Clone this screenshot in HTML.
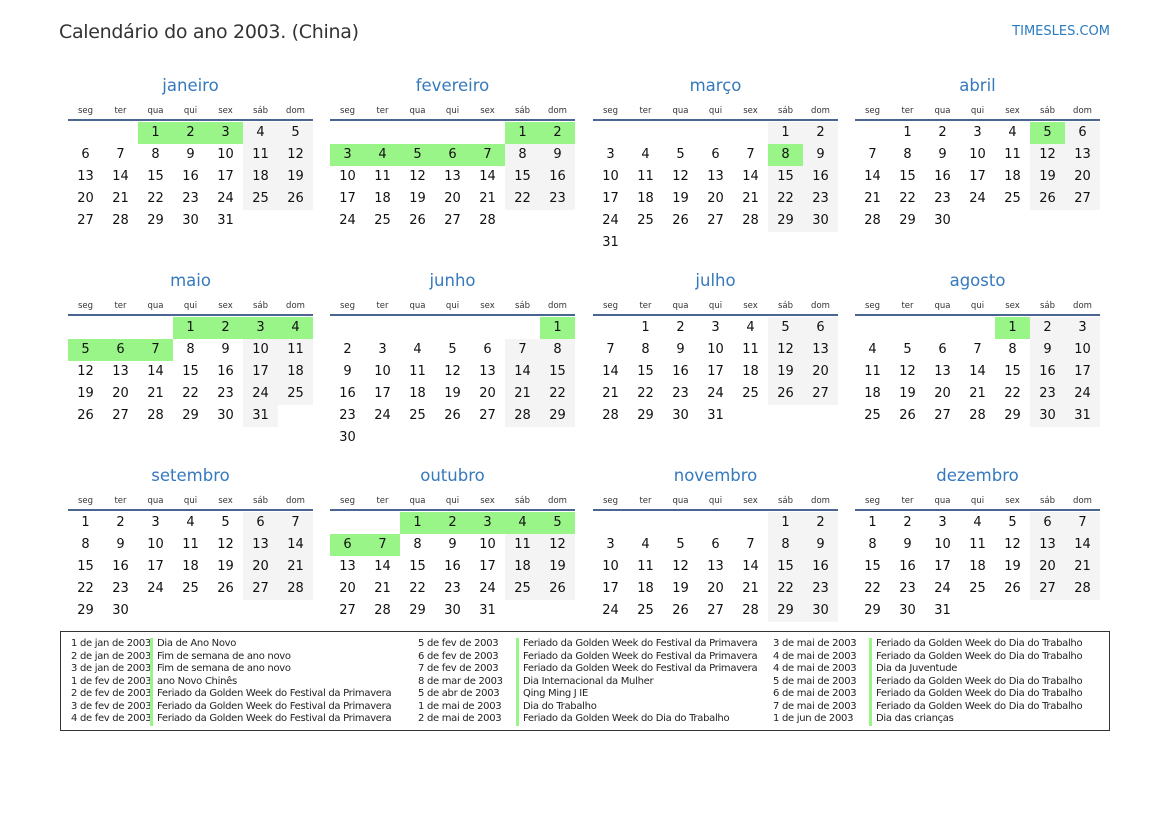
<!DOCTYPE html>
<html><head><meta charset="utf-8"><style>
*{margin:0;padding:0;box-sizing:border-box}
body{width:1169px;height:827px;background:#fff;position:relative;font-family:"DejaVu Sans","Liberation Sans",sans-serif;color:#111;overflow:hidden}
.title{position:absolute;left:59px;top:21px;font-size:19px;color:#333;letter-spacing:-0.3px}
.logo{position:absolute;right:59px;top:24px;font-size:13px;color:#2a7ac0}
.m{position:absolute;width:245px}
.t{height:24px;line-height:24px;text-align:center;font-size:16.5px;color:#3579bd}
.hd{display:grid;grid-template-columns:repeat(7,35px);margin-top:7px;height:12px;line-height:12px;font-size:8.5px;color:#333;text-align:center}
.ln{height:2px;background:#4a6690;margin-top:2px}
.g{display:grid;grid-template-columns:repeat(7,35px);grid-auto-rows:22px;margin-top:1px}
.g>*{text-align:center;line-height:22px;font-size:13px;font-style:normal;font-weight:normal;text-decoration:none}
.g>:nth-child(7n+6):not(u),.g>:nth-child(7n):not(u){background:#f4f4f4}
.g>b{background:#99f588!important}
.lg{position:absolute;left:60px;top:631px;width:1050px;height:100px;border:1.5px solid #333}
.c,.d{position:absolute;top:6px;font-size:10px;line-height:12.5px;color:#222;letter-spacing:-0.3px;white-space:nowrap}
.d{border-left:3px solid #99f588;padding-left:4px}
</style></head><body>
<div class="title">Calendário do ano 2003. (China)</div>
<div class="logo">TIMESLES.COM</div>

<div class="m" style="left:68px;top:74px"><div class="t">janeiro</div><div class="hd"><span>seg</span><span>ter</span><span>qua</span><span>qui</span><span>sex</span><span>sáb</span><span>dom</span></div><div class="ln"></div><div class="g"><u></u><u></u><b>1</b><b>2</b><b>3</b><i>4</i><i>5</i><i>6</i><i>7</i><i>8</i><i>9</i><i>10</i><i>11</i><i>12</i><i>13</i><i>14</i><i>15</i><i>16</i><i>17</i><i>18</i><i>19</i><i>20</i><i>21</i><i>22</i><i>23</i><i>24</i><i>25</i><i>26</i><i>27</i><i>28</i><i>29</i><i>30</i><i>31</i></div></div>

<div class="m" style="left:330px;top:74px"><div class="t">fevereiro</div><div class="hd"><span>seg</span><span>ter</span><span>qua</span><span>qui</span><span>sex</span><span>sáb</span><span>dom</span></div><div class="ln"></div><div class="g"><u></u><u></u><u></u><u></u><u></u><b>1</b><b>2</b><b>3</b><b>4</b><b>5</b><b>6</b><b>7</b><i>8</i><i>9</i><i>10</i><i>11</i><i>12</i><i>13</i><i>14</i><i>15</i><i>16</i><i>17</i><i>18</i><i>19</i><i>20</i><i>21</i><i>22</i><i>23</i><i>24</i><i>25</i><i>26</i><i>27</i><i>28</i></div></div>

<div class="m" style="left:593px;top:74px"><div class="t">março</div><div class="hd"><span>seg</span><span>ter</span><span>qua</span><span>qui</span><span>sex</span><span>sáb</span><span>dom</span></div><div class="ln"></div><div class="g"><u></u><u></u><u></u><u></u><u></u><i>1</i><i>2</i><i>3</i><i>4</i><i>5</i><i>6</i><i>7</i><b>8</b><i>9</i><i>10</i><i>11</i><i>12</i><i>13</i><i>14</i><i>15</i><i>16</i><i>17</i><i>18</i><i>19</i><i>20</i><i>21</i><i>22</i><i>23</i><i>24</i><i>25</i><i>26</i><i>27</i><i>28</i><i>29</i><i>30</i><i>31</i></div></div>

<div class="m" style="left:855px;top:74px"><div class="t">abril</div><div class="hd"><span>seg</span><span>ter</span><span>qua</span><span>qui</span><span>sex</span><span>sáb</span><span>dom</span></div><div class="ln"></div><div class="g"><u></u><i>1</i><i>2</i><i>3</i><i>4</i><b>5</b><i>6</i><i>7</i><i>8</i><i>9</i><i>10</i><i>11</i><i>12</i><i>13</i><i>14</i><i>15</i><i>16</i><i>17</i><i>18</i><i>19</i><i>20</i><i>21</i><i>22</i><i>23</i><i>24</i><i>25</i><i>26</i><i>27</i><i>28</i><i>29</i><i>30</i></div></div>

<div class="m" style="left:68px;top:269px"><div class="t">maio</div><div class="hd"><span>seg</span><span>ter</span><span>qua</span><span>qui</span><span>sex</span><span>sáb</span><span>dom</span></div><div class="ln"></div><div class="g"><u></u><u></u><u></u><b>1</b><b>2</b><b>3</b><b>4</b><b>5</b><b>6</b><b>7</b><i>8</i><i>9</i><i>10</i><i>11</i><i>12</i><i>13</i><i>14</i><i>15</i><i>16</i><i>17</i><i>18</i><i>19</i><i>20</i><i>21</i><i>22</i><i>23</i><i>24</i><i>25</i><i>26</i><i>27</i><i>28</i><i>29</i><i>30</i><i>31</i></div></div>

<div class="m" style="left:330px;top:269px"><div class="t">junho</div><div class="hd"><span>seg</span><span>ter</span><span>qua</span><span>qui</span><span>sex</span><span>sáb</span><span>dom</span></div><div class="ln"></div><div class="g"><u></u><u></u><u></u><u></u><u></u><u></u><b>1</b><i>2</i><i>3</i><i>4</i><i>5</i><i>6</i><i>7</i><i>8</i><i>9</i><i>10</i><i>11</i><i>12</i><i>13</i><i>14</i><i>15</i><i>16</i><i>17</i><i>18</i><i>19</i><i>20</i><i>21</i><i>22</i><i>23</i><i>24</i><i>25</i><i>26</i><i>27</i><i>28</i><i>29</i><i>30</i></div></div>

<div class="m" style="left:593px;top:269px"><div class="t">julho</div><div class="hd"><span>seg</span><span>ter</span><span>qua</span><span>qui</span><span>sex</span><span>sáb</span><span>dom</span></div><div class="ln"></div><div class="g"><u></u><i>1</i><i>2</i><i>3</i><i>4</i><i>5</i><i>6</i><i>7</i><i>8</i><i>9</i><i>10</i><i>11</i><i>12</i><i>13</i><i>14</i><i>15</i><i>16</i><i>17</i><i>18</i><i>19</i><i>20</i><i>21</i><i>22</i><i>23</i><i>24</i><i>25</i><i>26</i><i>27</i><i>28</i><i>29</i><i>30</i><i>31</i></div></div>

<div class="m" style="left:855px;top:269px"><div class="t">agosto</div><div class="hd"><span>seg</span><span>ter</span><span>qua</span><span>qui</span><span>sex</span><span>sáb</span><span>dom</span></div><div class="ln"></div><div class="g"><u></u><u></u><u></u><u></u><b>1</b><i>2</i><i>3</i><i>4</i><i>5</i><i>6</i><i>7</i><i>8</i><i>9</i><i>10</i><i>11</i><i>12</i><i>13</i><i>14</i><i>15</i><i>16</i><i>17</i><i>18</i><i>19</i><i>20</i><i>21</i><i>22</i><i>23</i><i>24</i><i>25</i><i>26</i><i>27</i><i>28</i><i>29</i><i>30</i><i>31</i></div></div>

<div class="m" style="left:68px;top:464px"><div class="t">setembro</div><div class="hd"><span>seg</span><span>ter</span><span>qua</span><span>qui</span><span>sex</span><span>sáb</span><span>dom</span></div><div class="ln"></div><div class="g"><i>1</i><i>2</i><i>3</i><i>4</i><i>5</i><i>6</i><i>7</i><i>8</i><i>9</i><i>10</i><i>11</i><i>12</i><i>13</i><i>14</i><i>15</i><i>16</i><i>17</i><i>18</i><i>19</i><i>20</i><i>21</i><i>22</i><i>23</i><i>24</i><i>25</i><i>26</i><i>27</i><i>28</i><i>29</i><i>30</i></div></div>

<div class="m" style="left:330px;top:464px"><div class="t">outubro</div><div class="hd"><span>seg</span><span>ter</span><span>qua</span><span>qui</span><span>sex</span><span>sáb</span><span>dom</span></div><div class="ln"></div><div class="g"><u></u><u></u><b>1</b><b>2</b><b>3</b><b>4</b><b>5</b><b>6</b><b>7</b><i>8</i><i>9</i><i>10</i><i>11</i><i>12</i><i>13</i><i>14</i><i>15</i><i>16</i><i>17</i><i>18</i><i>19</i><i>20</i><i>21</i><i>22</i><i>23</i><i>24</i><i>25</i><i>26</i><i>27</i><i>28</i><i>29</i><i>30</i><i>31</i></div></div>

<div class="m" style="left:593px;top:464px"><div class="t">novembro</div><div class="hd"><span>seg</span><span>ter</span><span>qua</span><span>qui</span><span>sex</span><span>sáb</span><span>dom</span></div><div class="ln"></div><div class="g"><u></u><u></u><u></u><u></u><u></u><i>1</i><i>2</i><i>3</i><i>4</i><i>5</i><i>6</i><i>7</i><i>8</i><i>9</i><i>10</i><i>11</i><i>12</i><i>13</i><i>14</i><i>15</i><i>16</i><i>17</i><i>18</i><i>19</i><i>20</i><i>21</i><i>22</i><i>23</i><i>24</i><i>25</i><i>26</i><i>27</i><i>28</i><i>29</i><i>30</i></div></div>

<div class="m" style="left:855px;top:464px"><div class="t">dezembro</div><div class="hd"><span>seg</span><span>ter</span><span>qua</span><span>qui</span><span>sex</span><span>sáb</span><span>dom</span></div><div class="ln"></div><div class="g"><i>1</i><i>2</i><i>3</i><i>4</i><i>5</i><i>6</i><i>7</i><i>8</i><i>9</i><i>10</i><i>11</i><i>12</i><i>13</i><i>14</i><i>15</i><i>16</i><i>17</i><i>18</i><i>19</i><i>20</i><i>21</i><i>22</i><i>23</i><i>24</i><i>25</i><i>26</i><i>27</i><i>28</i><i>29</i><i>30</i><i>31</i></div></div>

<div class="lg">
<div class="c" style="left:10px"><div>1 de jan de 2003</div><div>2 de jan de 2003</div><div>3 de jan de 2003</div><div>1 de fev de 2003</div><div>2 de fev de 2003</div><div>3 de fev de 2003</div><div>4 de fev de 2003</div></div>
<div class="d" style="left:89px"><div>Dia de Ano Novo</div><div>Fim de semana de ano novo</div><div>Fim de semana de ano novo</div><div>ano Novo Chinês</div><div>Feriado da Golden Week do Festival da Primavera</div><div>Feriado da Golden Week do Festival da Primavera</div><div>Feriado da Golden Week do Festival da Primavera</div></div>
<div class="c" style="left:357px"><div>5 de fev de 2003</div><div>6 de fev de 2003</div><div>7 de fev de 2003</div><div>8 de mar de 2003</div><div>5 de abr de 2003</div><div>1 de mai de 2003</div><div>2 de mai de 2003</div></div>
<div class="d" style="left:455px"><div>Feriado da Golden Week do Festival da Primavera</div><div>Feriado da Golden Week do Festival da Primavera</div><div>Feriado da Golden Week do Festival da Primavera</div><div>Dia Internacional da Mulher</div><div>Qing Ming J IE</div><div>Dia do Trabalho</div><div>Feriado da Golden Week do Dia do Trabalho</div></div>
<div class="c" style="left:712px"><div>3 de mai de 2003</div><div>4 de mai de 2003</div><div>4 de mai de 2003</div><div>5 de mai de 2003</div><div>6 de mai de 2003</div><div>7 de mai de 2003</div><div>1 de jun de 2003</div></div>
<div class="d" style="left:808px"><div>Feriado da Golden Week do Dia do Trabalho</div><div>Feriado da Golden Week do Dia do Trabalho</div><div>Dia da Juventude</div><div>Feriado da Golden Week do Dia do Trabalho</div><div>Feriado da Golden Week do Dia do Trabalho</div><div>Feriado da Golden Week do Dia do Trabalho</div><div>Dia das crianças</div></div>
</div>
</body></html>
